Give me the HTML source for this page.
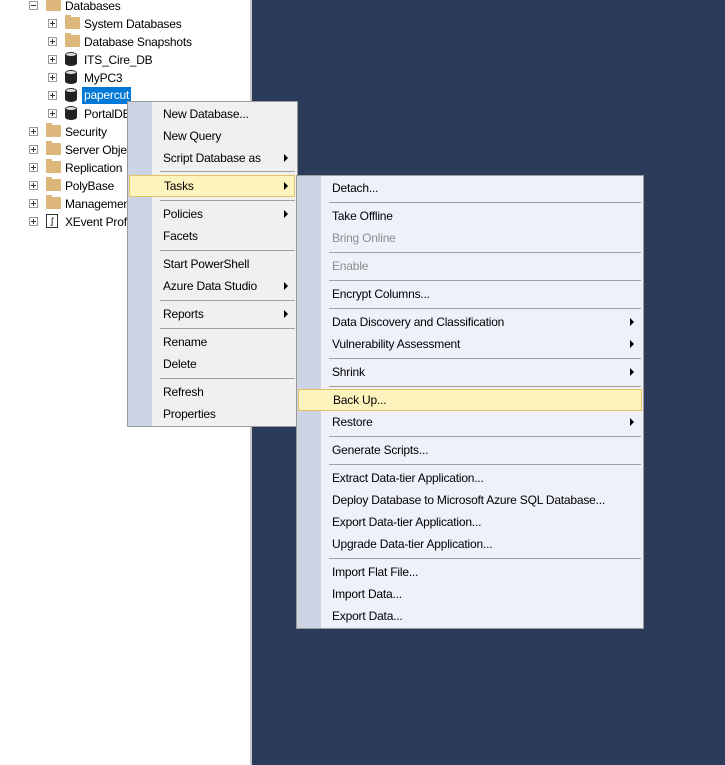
<!DOCTYPE html>
<html><head><style>
*{margin:0;padding:0;box-sizing:border-box}
body{width:725px;height:765px;overflow:hidden;background:#2d3b5a;font-family:"Liberation Sans",sans-serif;font-size:12px;letter-spacing:-0.2px;color:#000;position:relative}
.panel{position:absolute;left:0;top:0;height:765px;background:#fff;border-right:2px solid #c8c8c8;width:252px}
.r{position:absolute;height:18px;line-height:18px;white-space:nowrap}
.ex{position:absolute;width:9px;height:9px;border:1px solid #9a9a9a;background:#fff}
.ex:before{content:"";position:absolute;left:1px;top:3px;width:5px;height:1px;background:#333}
.ex.p:after{content:"";position:absolute;left:3px;top:1px;width:1px;height:5px;background:#333}
.fo{position:absolute;width:15px;height:12px;background:#dcb67a;border-radius:1px}
.fo:before{content:"";position:absolute;left:0;top:-2px;width:6px;height:3px;background:#dcb67a}
.db{position:absolute;width:12px;height:14px;background:#222;border-radius:6px/3px}
.db:before{content:"";position:absolute;left:1px;top:1px;width:10px;height:3px;border-radius:50%;background:#ddd}
.m{position:absolute;border:1px solid #9a9a9a}
.g{position:absolute;left:0;top:0;bottom:0;width:24px}
.i{position:absolute;left:0;right:0;height:22px;line-height:22px;white-space:nowrap}
.i.h{background:#fdf3bd;border:1px solid #e5c365}
.s{position:absolute;height:1px;background:#a0a0a0}
.a{position:absolute;right:9px;top:7px;width:0;height:0;border-left:4px solid #000;border-top:4px solid transparent;border-bottom:4px solid transparent}
.dis{color:#8d8d8d}
</style></head><body>
<div class="panel"></div>
<div class="ex" style="left:29px;top:1px"></div><div class="fo" style="left:46px;top:-1px"></div><div class="r" style="left:65px;top:-3px">Databases</div>
<div class="ex p" style="left:48px;top:19px"></div><div class="fo" style="left:65px;top:17px"></div><div class="r" style="left:84px;top:15px">System Databases</div>
<div class="ex p" style="left:48px;top:37px"></div><div class="fo" style="left:65px;top:35px"></div><div class="r" style="left:84px;top:33px">Database Snapshots</div>
<div class="ex p" style="left:48px;top:55px"></div><div class="db" style="left:65px;top:52px"></div><div class="r" style="left:84px;top:51px">ITS_Cire_DB</div>
<div class="ex p" style="left:48px;top:73px"></div><div class="db" style="left:65px;top:70px"></div><div class="r" style="left:84px;top:69px">MyPC3</div>
<div class="ex p" style="left:48px;top:91px"></div><div class="db" style="left:65px;top:88px"></div><div class="r" style="left:82px;top:87px;background:#0078d7;color:#fff;padding:0 2px;height:17px;line-height:17px">papercut</div>
<div class="ex p" style="left:48px;top:109px"></div><div class="db" style="left:65px;top:106px"></div><div class="r" style="left:84px;top:105px">PortalDB</div>
<div class="ex p" style="left:29px;top:127px"></div><div class="fo" style="left:46px;top:125px"></div><div class="r" style="left:65px;top:123px">Security</div>
<div class="ex p" style="left:29px;top:145px"></div><div class="fo" style="left:46px;top:143px"></div><div class="r" style="left:65px;top:141px">Server Objects</div>
<div class="ex p" style="left:29px;top:163px"></div><div class="fo" style="left:46px;top:161px"></div><div class="r" style="left:65px;top:159px">Replication</div>
<div class="ex p" style="left:29px;top:181px"></div><div class="fo" style="left:46px;top:179px"></div><div class="r" style="left:65px;top:177px">PolyBase</div>
<div class="ex p" style="left:29px;top:199px"></div><div class="fo" style="left:46px;top:197px"></div><div class="r" style="left:65px;top:195px">Management</div>
<div class="ex p" style="left:29px;top:217px"></div><div style="position:absolute;left:46px;top:214px;width:12px;height:14px;border:1px solid #333;font-size:9px;line-height:12px;text-align:center">ʃ</div><div class="r" style="left:65px;top:213px">XEvent Profiler</div>

<div class="m" style="left:127px;top:101px;width:171px;height:326px;background:#f0f0f0">
<div class="g" style="background:#cdd4e3"></div>
<div class="i" style="top:1px;padding-left:35px">New Database...</div>
<div class="i" style="top:23px;padding-left:35px">New Query</div>
<div class="i" style="top:45px;padding-left:35px">Script Database as<span class="a"></span></div>
<div class="s" style="left:32px;right:2px;top:69px"></div>
<div class="i h" style="top:73px;left:1px;right:2px;padding-left:34px;line-height:20px">Tasks<span class="a" style="right:6px;top:6px"></span></div>
<div class="s" style="left:32px;right:2px;top:98px"></div>
<div class="i" style="top:101px;padding-left:35px">Policies<span class="a"></span></div>
<div class="i" style="top:123px;padding-left:35px">Facets</div>
<div class="s" style="left:32px;right:2px;top:148px"></div>
<div class="i" style="top:151px;padding-left:35px">Start PowerShell</div>
<div class="i" style="top:173px;padding-left:35px">Azure Data Studio<span class="a"></span></div>
<div class="s" style="left:32px;right:2px;top:198px"></div>
<div class="i" style="top:201px;padding-left:35px">Reports<span class="a"></span></div>
<div class="s" style="left:32px;right:2px;top:226px"></div>
<div class="i" style="top:229px;padding-left:35px">Rename</div>
<div class="i" style="top:251px;padding-left:35px">Delete</div>
<div class="s" style="left:32px;right:2px;top:276px"></div>
<div class="i" style="top:279px;padding-left:35px">Refresh</div>
<div class="i" style="top:301px;padding-left:35px">Properties</div>
</div>

<div class="m" style="left:296px;top:175px;width:348px;height:454px;background:#eef0fa">
<div class="g" style="background:#cdd4e3"></div>
<div class="i" style="top:1px;padding-left:35px">Detach...</div>
<div class="s" style="left:32px;right:2px;top:26px"></div>
<div class="i" style="top:29px;padding-left:35px">Take Offline</div>
<div class="i dis" style="top:51px;padding-left:35px">Bring Online</div>
<div class="s" style="left:32px;right:2px;top:76px"></div>
<div class="i dis" style="top:79px;padding-left:35px">Enable</div>
<div class="s" style="left:32px;right:2px;top:104px"></div>
<div class="i" style="top:107px;padding-left:35px">Encrypt Columns...</div>
<div class="s" style="left:32px;right:2px;top:132px"></div>
<div class="i" style="top:135px;padding-left:35px">Data Discovery and Classification<span class="a"></span></div>
<div class="i" style="top:157px;padding-left:35px">Vulnerability Assessment<span class="a"></span></div>
<div class="s" style="left:32px;right:2px;top:182px"></div>
<div class="i" style="top:185px;padding-left:35px">Shrink<span class="a"></span></div>
<div class="s" style="left:32px;right:2px;top:210px"></div>
<div class="i h" style="top:213px;left:1px;right:1px;padding-left:34px;line-height:20px">Back Up...</div>
<div class="i" style="top:235px;padding-left:35px">Restore<span class="a"></span></div>
<div class="s" style="left:32px;right:2px;top:260px"></div>
<div class="i" style="top:263px;padding-left:35px">Generate Scripts...</div>
<div class="s" style="left:32px;right:2px;top:288px"></div>
<div class="i" style="top:291px;padding-left:35px">Extract Data-tier Application...</div>
<div class="i" style="top:313px;padding-left:35px">Deploy Database to Microsoft Azure SQL Database...</div>
<div class="i" style="top:335px;padding-left:35px">Export Data-tier Application...</div>
<div class="i" style="top:357px;padding-left:35px">Upgrade Data-tier Application...</div>
<div class="s" style="left:32px;right:2px;top:382px"></div>
<div class="i" style="top:385px;padding-left:35px">Import Flat File...</div>
<div class="i" style="top:407px;padding-left:35px">Import Data...</div>
<div class="i" style="top:429px;padding-left:35px">Export Data...</div>
</div>
</body></html>
